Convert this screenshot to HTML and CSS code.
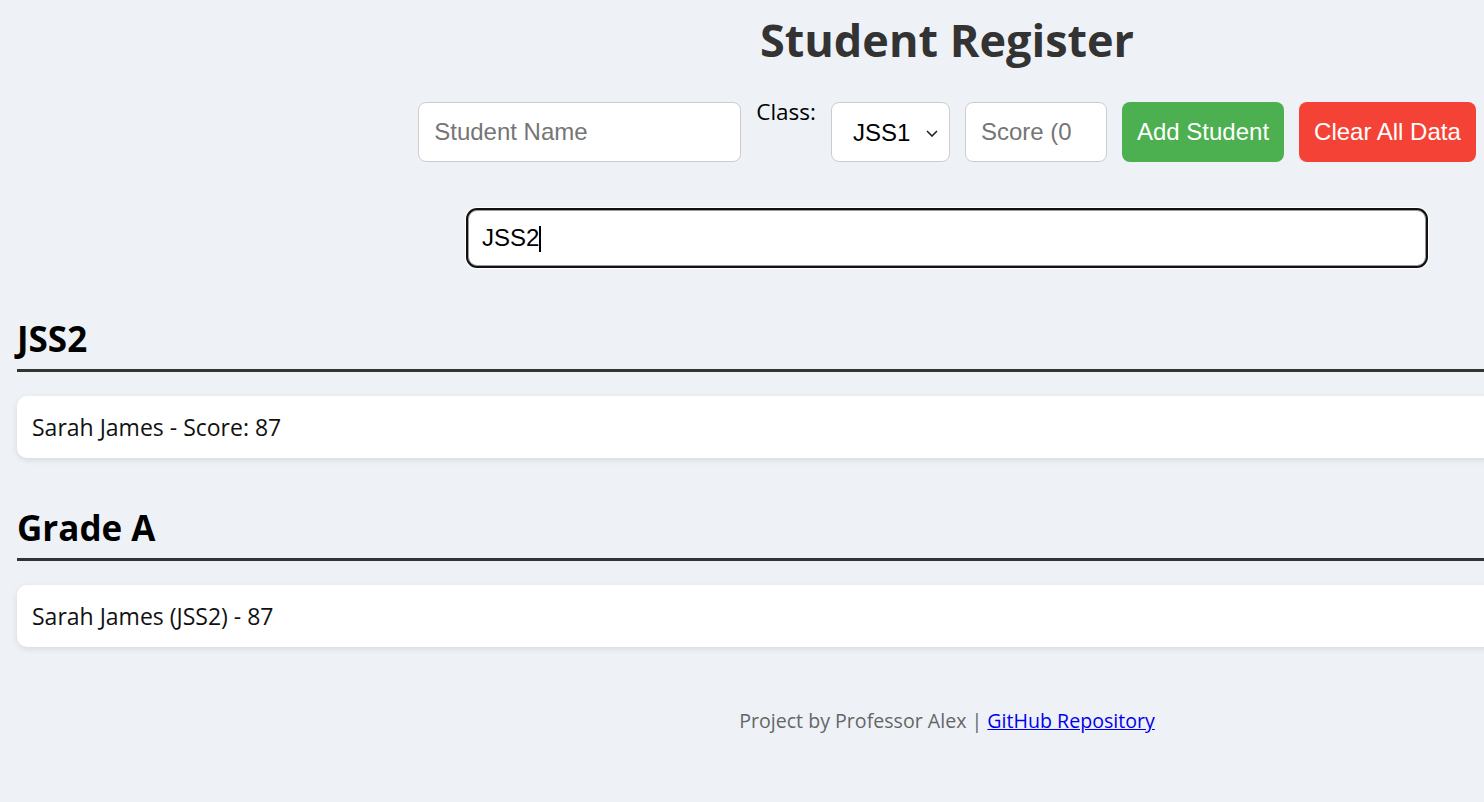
FILE: index.html
```html
<!DOCTYPE html>
<html lang="en">
<head>
<meta charset="utf-8">
<title>Student Register</title>
<link rel="stylesheet" href="styles.css">
</head>
<body>
<div class="page">
  <h1 class="title">Student Register</h1>

  <div class="controls">
    <input class="field name-field" type="text" placeholder="Student Name">
    <label class="class-label">Class:</label>
    <div class="select-wrap">
      <select class="field class-select">
        <option>JSS1</option>
        <option>JSS2</option>
        <option>JSS3</option>
      </select>
      <svg class="chevron" width="12" height="7" viewBox="0 0 12 7"><path d="M1 1 L6 6 L11 1" fill="none" stroke="#222" stroke-width="1.6"/></svg>
    </div>
    <input class="field score-field" type="number" placeholder="Score (0-100)">
    <button class="btn btn-add">Add Student</button>
    <button class="btn btn-clear">Clear All Data</button>
  </div>

  <div class="search-row">
    <div class="search-wrap">
      <input class="search" type="text" value="JSS2">
      <span class="caret"></span>
    </div>
  </div>

  <section class="group">
    <h2 class="group-title">JSS2</h2>
    <div class="card">Sarah James - Score: 87</div>
  </section>

  <section class="group">
    <h2 class="group-title">Grade A</h2>
    <div class="card">Sarah James (JSS2) - 87</div>
  </section>

  <footer class="footer">Project by Professor Alex | <a href="#">GitHub Repository</a></footer>
</div>
</body>
</html>
```

FILE: styles.css
```css
html, body {
  margin: 0;
  padding: 0;
  overflow-x: hidden;
}

body {
  background: #eef2f7;
  font-family: "Open Sans", "Noto Sans", sans-serif;
  color: #111;
}

.page {
  width: 1860px;
  padding: 0 17px;
}

.title {
  margin: 8px 0 30px;
  font-size: 45px;
  line-height: 64px;
  font-weight: 700;
  color: #333;
  text-align: center;
}

.controls {
  display: flex;
  justify-content: center;
  align-items: flex-start;
  gap: 15px;
  height: 60px;
}

.field {
  box-sizing: border-box;
  height: 60px;
  border: 1px solid #ccc;
  border-radius: 8px;
  background: #fff;
  font-family: "Liberation Sans", Arial, sans-serif;
  font-size: 24px;
  color: #000;
  padding: 0 15px;
  outline: none;
}

.field::placeholder {
  color: #757575;
}

.name-field {
  width: 323px;
}

.class-label {
  font-size: 22.5px;
  line-height: 20px;
  color: #000;
}

.select-wrap {
  position: relative;
}

.class-select {
  width: 119px;
  appearance: none;
  -webkit-appearance: none;
  padding-left: 21px;
}

.chevron {
  position: absolute;
  right: 12px;
  top: 28px;
  pointer-events: none;
}

.score-field {
  width: 142px;
  padding-right: 20px;
}

.btn {
  box-sizing: border-box;
  height: 60px;
  border: none;
  border-radius: 8px;
  padding: 0 15px;
  font-family: "Liberation Sans", Arial, sans-serif;
  font-size: 24px;
  color: #fff;
}

.btn-add {
  background: #4caf50;
}

.btn-clear {
  background: #f44336;
}

.search-row {
  display: flex;
  justify-content: center;
  margin-top: 48px;
}

.search-wrap {
  position: relative;
}

.search {
  box-sizing: border-box;
  width: 958px;
  height: 56px;
  border: 1px solid #9a9a9a;
  border-radius: 9px;
  box-shadow: 0 0 0 2px #111, 0 0 0 3px #fff;
  padding: 0 13px;
  font-family: "Liberation Sans", Arial, sans-serif;
  font-size: 24px;
  color: #000;
  outline: none;
  background: #fff;
}

.caret {
  position: absolute;
  left: 71px;
  top: 16px;
  width: 2px;
  height: 26px;
  background: #000;
}

.group {
  margin-top: 51px;
}

.group + .group {
  margin-top: 48px;
}

.group-title {
  margin: 0;
  font-size: 35px;
  line-height: 44px;
  font-weight: 700;
  color: #000;
  padding-bottom: 8px;
  border-bottom: 3px solid #333;
}

.card {
  margin-top: 24px;
  height: 62px;
  line-height: 62px;
  padding: 0 15px;
  background: #fff;
  border-radius: 10px;
  box-shadow: 0 2px 6px rgba(0, 0, 0, 0.1);
  font-size: 23px;
  color: #111;
}

.footer {
  margin-top: 59px;
  text-align: center;
  font-size: 19.6px;
  line-height: 30px;
  color: #666;
}

.footer a {
  color: #0000ee;
}
```
